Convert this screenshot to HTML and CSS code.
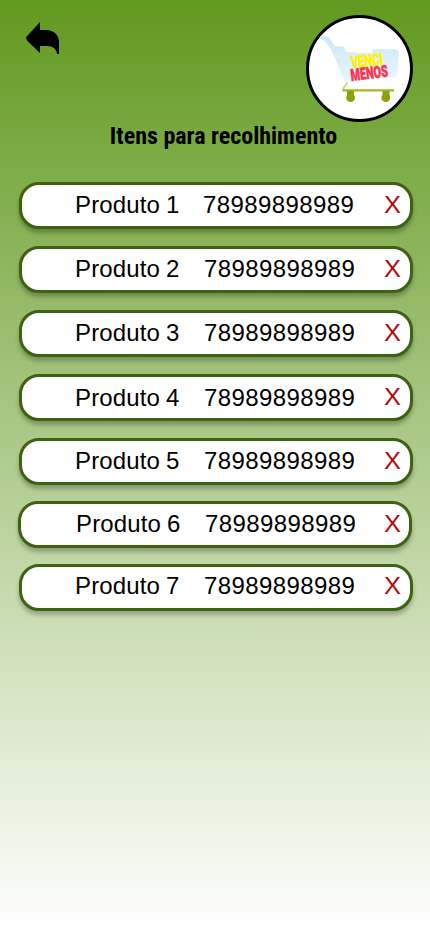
FILE: index.html
```html
<!DOCTYPE html>
<html lang="pt-BR">
<head>
<meta charset="utf-8">
<title>Itens para recolhimento</title>
<link rel="stylesheet" href="styles.css">
</head>
<body>
<main class="screen">
  <header class="header">
    <a class="back" aria-label="Voltar">
      <svg width="34" height="32" viewBox="0 0 34 32"><path d="M0 15.200 14 0V8H20C28 8 33 13 33 20V32H31C30.500 27 27 24 21 24H14V31L1.500 19Q0 17.500 0 15.200Z"/></svg>
    </a>
    <div class="logo">
      <svg width="101" height="101" viewBox="0 0 101 101">
        <defs><linearGradient id="cart" x1="0" y1="0" x2="0" y2="1"><stop offset="0" stop-color="#cce9f7"/><stop offset="1" stop-color="#e8f5ff"/></linearGradient></defs>
        <path fill="url(#cart)" d="M11 17.500 19.300 18.700 26 28 35.300 28.700 36.700 34 62.700 35.500 63.700 31.300H86Q90 31.300 90 36L88 57Q87.700 59 84 59.300L36 63.700 22 31 16 23 11 20Z"/>
        <path d="M38.500 64.500 33.500 71.500" stroke="#c8da91" stroke-width="2" fill="none"/>
        <path d="M33.500 72.300H85" stroke="#a6b526" stroke-width="2.200"/>
        <g fill="#8aa30c"><path d="M38 73H45V78H38ZM73.500 73H80.500V78H73.500Z"/><circle cx="41.600" cy="79.700" r="4.400"/><circle cx="76.800" cy="79.700" r="4.400"/></g>
        <g class="logo-text"><text class="venci" transform="translate(42.800 50.300) rotate(-7)" textLength="32" lengthAdjust="spacingAndGlyphs">VENCI</text><text class="menos" transform="translate(42.300 63) rotate(-7)" textLength="37.500" lengthAdjust="spacingAndGlyphs">MENOS</text></g>
      </svg>
    </div>
  </header>
  <h1 class="title"><span>Itens para recolhimento</span></h1>
  <ul class="list">
    <li class="item first"><span class="name">Produto 1</span><span class="code">78989898989</span><span class="remove">X</span></li>
    <li class="item"><span class="name">Produto 2</span><span class="code">78989898989</span><span class="remove">X</span></li>
    <li class="item"><span class="name">Produto 3</span><span class="code">78989898989</span><span class="remove">X</span></li>
    <li class="item low"><span class="name">Produto 4</span><span class="code">78989898989</span><span class="remove">X</span></li>
    <li class="item"><span class="name">Produto 5</span><span class="code">78989898989</span><span class="remove">X</span></li>
    <li class="item shifted"><span class="name">Produto 6</span><span class="code">78989898989</span><span class="remove">X</span></li>
    <li class="item last"><span class="name">Produto 7</span><span class="code">78989898989</span><span class="remove">X</span></li>
  </ul>
</main>
</body>
</html>
```
FILE: styles.css
```css
* { box-sizing: border-box; }
body { margin: 0; }
.screen {
  width: 430px;
  height: 932px;
  overflow: hidden;
  background: linear-gradient(180deg, #62991f 0%, #fff 100%);
  font-family: "Liberation Sans", sans-serif;
  color: #000;
}
.header {
  display: flex;
  justify-content: space-between;
  align-items: flex-start;
  height: 122px;
  padding: 15px 17px 0 26px;
}
.back { margin-top: 7px; }
.back svg, .logo svg { display: block; }
.logo {
  width: 107px;
  height: 107px;
  border: 3px solid #000;
  border-radius: 50%;
  background: #fff;
  overflow: hidden;
}
.logo-text { font: 900 16.500px "Roboto", sans-serif; }
.venci { fill: #fff200; stroke: #fff200; stroke-width: .6px; }
.menos { fill: #f53850; stroke: #f53850; stroke-width: .6px; }
.title {
  display: flex;
  justify-content: center;
  height: 28px;
  margin: 0 0 0 17px;
  font: 700 24px/28px "Roboto Condensed", "Roboto", sans-serif;
  font-stretch: 75%;
  white-space: nowrap;
}
.list {
  display: flex;
  flex-direction: column;
  gap: 17px;
  margin: 32px 17px 0 19px;
  padding: 0;
  list-style: none;
}
.item {
  display: grid;
  grid-template-columns: 129px 180px 1fr;
  align-items: center;
  height: 47px;
  padding: 0 0 2px 53px;
  border: 3px solid #3d6310;
  border-radius: 20px;
  background: #fff;
  box-shadow: 0 4px 4px rgba(0, 0, 0, .25);
  font-size: 24px;
  line-height: 28px;
  white-space: nowrap;
}
.first { grid-template-columns: 128px 181px 1fr; }
.low { padding-bottom: 0; }
.low .remove { margin-bottom: 2px; }
.name { letter-spacing: .15px; word-spacing: -1px; }
.code { letter-spacing: .4px; }
.remove {
  color: #b90707;
  transform: scaleX(1.06);
  transform-origin: left;
}
.shifted {
  grid-template-columns: 129px 179px 1fr;
  margin: -1px 1px -1px -1px;
  padding-left: 55px;
}
.last { padding-bottom: 4px; }
```
